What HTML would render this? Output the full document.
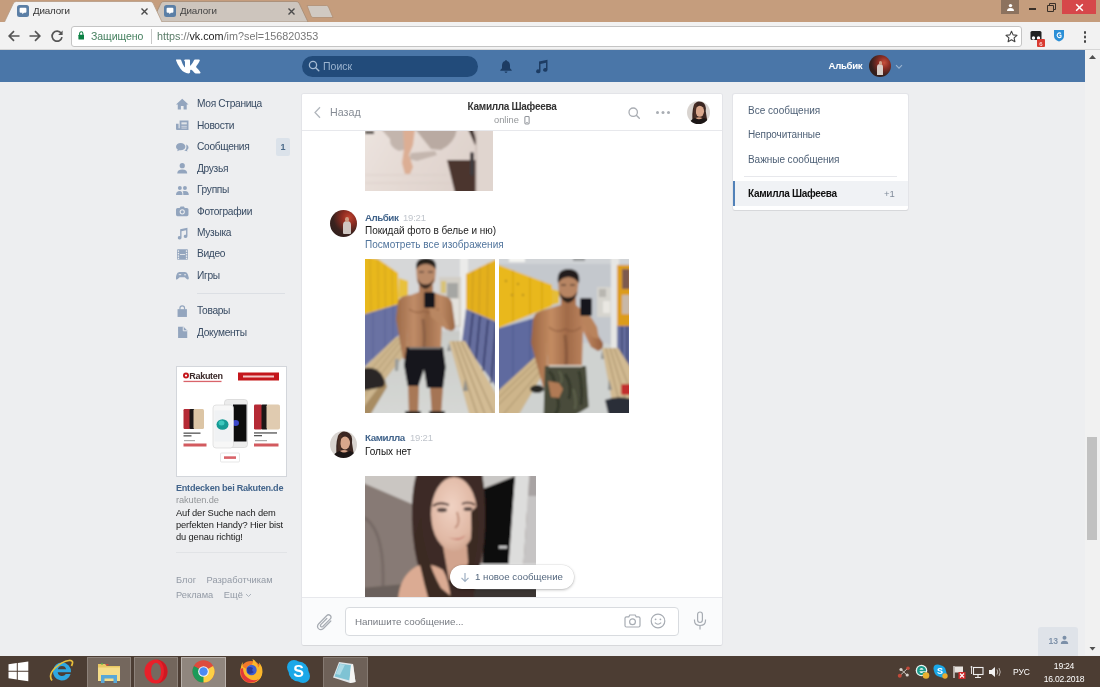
<!DOCTYPE html>
<html><head><meta charset="utf-8">
<style>
*{box-sizing:border-box;margin:0;padding:0}
html,body{width:1100px;height:687px;overflow:hidden;background:#edeef0;font-family:"Liberation Sans",sans-serif;}
#root{position:relative;width:1100px;height:687px;overflow:hidden;background:#edeef0}
.abs{position:absolute}
div.abs{will-change:opacity}
/* chrome */
#tabstrip{left:0;top:0;width:1100px;height:23px;background:#c59d7d}
#toolbar{left:0;top:22px;width:1100px;height:28px;background:#f2f2f2;border-bottom:1px solid #d6d6d6}
#urlbox{left:70.500px;top:25.500px;width:951px;height:21px;background:#fff;border:1px solid #c4c4c4;border-radius:3px}
.tabtxt{font-size:9.800px;color:#333;top:5.400px;letter-spacing:-0.15px;line-height:12px}
/* vk header */
#vkhead{left:0;top:50px;width:1085px;height:32px;background:#4a76a8}
#search{left:302px;top:56px;width:176px;height:21px;border-radius:11px;background:#224b7a}
/* scrollbar */
#sb{left:1085px;top:50px;width:15px;height:605px;background:#f1f1f1}
#sbthumb{left:1087px;top:437px;width:10px;height:103px;background:#c1c1c1}
/* left nav */
.nav{left:197px;font-size:11px;color:#2a5885;letter-spacing:-0.1px}
.nav.i{left:176px}
/* panels */
.panel{background:#fff;border-radius:2px;box-shadow:0 1px 0 0 #d7d8db,0 0 0 1px #e3e4e8}
#chat{left:302px;top:94px;width:420px;height:551px}
#right{left:733px;top:94px;width:175px;height:116px}
#chathead{left:302px;top:94px;width:420px;height:37px;background:#fff;border-bottom:1px solid #e7e8ec;border-radius:2px 2px 0 0}
#chatfoot{left:302px;top:597px;width:420px;height:48px;background:#fafbfc;border-top:1px solid #e7e8ec;border-radius:0 0 2px 2px}
#input{left:345px;top:607px;width:334px;height:28.500px;background:#fff;border:1px solid #d8dbdf;border-radius:4px}
/* taskbar */
#taskbar{left:0;top:656px;width:1100px;height:31px;background:#4c3d33}
.t11{font-size:11px}
.blue{color:#2a5885}
</style></head><body><div id="root">

<!-- CHROME TAB STRIP -->
<div id="tabstrip" class="abs"></div>
<svg class="abs" style="left:0;top:0" width="1100" height="23">
  <path d="M152 22 L161 3 Q162 1.5 164 1.5 L296 1.5 Q298 1.5 299 3 L308 22 Z" fill="#cdc5bd" stroke="#a48a74" stroke-width="0.8"/>
  <path d="M0 22 L4.500 22 L13.500 3 Q14.500 1.500 16.500 1.500 L150 1.500 Q152 1.5 153 3 L162 22 L1100 22 L1100 23 L0 23 Z" fill="#f2f2f2"/>
  <path d="M4.500 22 L13.500 3 Q14.500 1.500 16.500 1.500 L150 1.500 Q152 1.5 153 3 L162 22" fill="none" stroke="#b59a84" stroke-width="0.8"/>
  <path d="M307 5.500 L326.500 5.500 Q328 5.500 328.500 7 L333 17.500 L313 17.500 Q311.500 17.500 311 16 Z" fill="#d0c9c2" stroke="#b08f74" stroke-width="0.8"/>
</svg>
<div id="toolbar" class="abs"></div>
<div id="urlbox" class="abs"></div>


<!-- tab contents -->
<svg class="abs" style="left:17px;top:5px" width="12" height="12" viewBox="0 0 12 12"><rect width="12" height="12" rx="2.5" fill="#5b7fa6"/><path d="M2.600 3.800 Q2.600 2.800 3.600 2.800 L8.400 2.800 Q9.400 2.800 9.400 3.800 L9.400 6.700 Q9.400 7.700 8.400 7.700 L7 7.700 L5.300 9.300 L5.300 7.700 L3.600 7.700 Q2.600 7.700 2.600 6.700 Z" fill="#fff"/></svg>
<div class="abs tabtxt" style="left:33px">Диалоги</div>
<svg class="abs" style="left:140px;top:7px" width="9" height="9" viewBox="0 0 9 9"><path d="M1.500 1.500 L7.500 7.500 M7.500 1.500 L1.500 7.500" stroke="#4a4a4a" stroke-width="1.400"/></svg>
<svg class="abs" style="left:164px;top:5px" width="12" height="12" viewBox="0 0 12 12"><rect width="12" height="12" rx="2.500" fill="#5b7fa6"/><path d="M2.600 3.800 Q2.600 2.800 3.600 2.800 L8.400 2.800 Q9.400 2.800 9.400 3.800 L9.400 6.700 Q9.400 7.700 8.400 7.700 L7 7.700 L5.300 9.300 L5.300 7.700 L3.600 7.700 Q2.600 7.700 2.600 6.700 Z" fill="#fff"/></svg>
<div class="abs tabtxt" style="left:180px;color:#444">Диалоги</div>
<svg class="abs" style="left:287px;top:7px" width="9" height="9" viewBox="0 0 9 9"><path d="M1.500 1.500 L7.500 7.500 M7.500 1.500 L1.500 7.500" stroke="#4a4a4a" stroke-width="1.400"/></svg>
<!-- window controls -->
<div class="abs" style="left:1001px;top:0;width:18px;height:14px;background:#8c725e"></div>
<svg class="abs" style="left:1005.500px;top:3px" width="9" height="9" viewBox="0 0 9 9"><circle cx="4.500" cy="2.600" r="1.700" fill="#fff"/><path d="M1 8 Q1 5 4.500 5 Q8 5 8 8 Z" fill="#fff"/></svg>
<div class="abs" style="left:1029px;top:8px;width:7px;height:2px;background:#3a3028"></div>
<svg class="abs" style="left:1046px;top:2px" width="11" height="11" viewBox="0 0 11 11"><path d="M1.500 3.500 H7.500 V9.500 H1.500 Z M3.500 3.500 V1.500 H9.500 V7.500 H7.500" fill="none" stroke="#3a3028" stroke-width="1"/></svg>
<div class="abs" style="left:1062px;top:0;width:34px;height:14px;background:#d6474a"></div>
<svg class="abs" style="left:1075px;top:3px" width="9" height="9" viewBox="0 0 9 9"><path d="M1.200 1.200 L7.800 7.800 M7.800 1.200 L1.200 7.800" stroke="#fff" stroke-width="1.500"/></svg>
<!-- toolbar icons -->
<svg class="abs" style="left:7px;top:29px" width="14" height="14" viewBox="0 0 14 14"><path d="M12.500 7 H2.500 M7 2.200 L2.200 7 L7 11.800" fill="none" stroke="#555" stroke-width="1.700"/></svg>
<svg class="abs" style="left:28px;top:29px" width="14" height="14" viewBox="0 0 14 14"><path d="M1.500 7 H11.500 M7 2.200 L11.800 7 L7 11.800" fill="none" stroke="#555" stroke-width="1.700"/></svg>
<svg class="abs" style="left:50px;top:29px" width="14" height="14" viewBox="0 0 14 14"><path d="M11.200 4.300 A5 5 0 1 0 12 8.200" fill="none" stroke="#555" stroke-width="1.700"/><path d="M12.600 1.500 V6 H8.100 Z" fill="#555"/></svg>
<svg class="abs" style="left:77.800px;top:30.800px" width="6.500" height="9" viewBox="0 0 8 11"><path d="M2 5 V3 A2 2 0 0 1 6 3 V5" fill="none" stroke="#0b8043" stroke-width="1.300"/><rect x="0.500" y="4.500" width="7" height="6" rx="0.800" fill="#0b8043"/></svg>
<div class="abs" style="left:91px;top:30px;font-size:10.500px;color:#45805f;letter-spacing:-0.05px;line-height:12px">Защищено</div>
<div class="abs" style="left:151px;top:29px;width:1px;height:15px;background:#c8c8c8"></div>
<div class="abs" style="left:157px;top:30px;font-size:10.800px;color:#777;letter-spacing:0px;line-height:12px"><span style="color:#5a7c68">https</span>://<span style="color:#222">vk.com</span>/im?sel=156820353</div>
<svg class="abs" style="left:1005px;top:30px" width="13" height="13" viewBox="0 0 13 13"><path d="M6.500 1.300 L8.100 4.900 L12 5.300 L9.100 7.900 L9.900 11.700 L6.500 9.700 L3.100 11.700 L3.900 7.900 L1 5.300 L4.900 4.900 Z" fill="none" stroke="#444" stroke-width="1.100" stroke-linejoin="round"/></svg>
<svg class="abs" style="left:1030px;top:30px" width="16" height="17" viewBox="0 0 16 17"><rect x="0.500" y="1" width="11" height="9" rx="1.500" fill="#222"/><circle cx="3.500" cy="8" r="1.700" fill="#fff"/><circle cx="8.500" cy="8" r="1.700" fill="#fff"/><rect x="7" y="9" width="8" height="8" rx="1" fill="#d93a31"/><text x="11" y="15.500" font-size="6" fill="#fff" text-anchor="middle" font-family="Liberation Sans">6</text></svg>
<svg class="abs" style="left:1053px;top:29px" width="12" height="13" viewBox="0 0 12 13"><path d="M1 1 H11 V7 Q11 10.500 6 12.500 Q1 10.500 1 7 Z" fill="#2b8fd6"/><path d="M8 4.500 A2.300 2.300 0 1 0 8 8 L8 6.300 L6.200 6.300" fill="none" stroke="#fff" stroke-width="1.100"/></svg>
<div class="abs" style="left:1083.500px;top:31px;width:2.500px;height:2.500px;border-radius:50%;background:#444;box-shadow:0 4.500px 0 #444,0 9px 0 #444"></div>

<!-- VK HEADER -->
<div id="vkhead" class="abs"></div>
<div id="search" class="abs"></div>


<!-- vk header content -->
<svg class="abs" style="left:176px;top:59px" width="26" height="15" viewBox="0 0 26 15"><path d="M0.300 0.600 H4.300 Q5 0.600 5.200 1.300 Q6.600 5.800 8.400 8 Q9 8.600 9 7.600 V3.200 Q8.900 1.900 8 1.500 Q8.300 0.600 9.400 0.600 H13.300 Q14 0.600 14 1.500 V6.300 Q14.100 7 14.600 6.600 Q16.500 4.700 18 1.300 Q18.300 0.600 19 0.600 H22.900 Q24.100 0.600 23.700 1.800 Q22.900 4 20.300 7.300 Q19.900 7.900 20.400 8.500 Q23.300 11.300 24.400 13.200 Q24.800 14.400 23.600 14.400 H19.800 Q19 14.400 18.400 13.700 Q16.500 11.500 15.300 10.800 Q14.100 10.400 14.100 11.700 V13.300 Q14.100 14.400 12.500 14.400 Q7.800 14.400 4.300 9.600 Q1.300 5.400 0 1.300 Q-0.100 0.600 0.300 0.600 Z" fill="#fff"/></svg>
<svg class="abs" style="left:308px;top:60px" width="12" height="12" viewBox="0 0 12 12"><circle cx="5" cy="5" r="3.600" fill="none" stroke="#a5bbd3" stroke-width="1.300"/><path d="M7.700 7.700 L10.800 10.800" stroke="#a5bbd3" stroke-width="1.400" stroke-linecap="round"/></svg>
<div class="abs" style="left:323px;top:60px;font-size:10.500px;color:#9bb4d0">Поиск</div>
<svg class="abs" style="left:499px;top:59px" width="14" height="15" viewBox="0 0 14 15"><path d="M7 1 Q7.900 1 7.900 1.900 Q11 2.800 11 6.500 V9.300 L12.700 11 V11.700 H1.300 V11 L3 9.300 V6.500 Q3 2.800 6.100 1.900 Q6.100 1 7 1 Z" fill="#1d3c63"/><path d="M5.500 12.600 H8.500 Q8.300 14 7 14 Q5.700 14 5.500 12.600 Z" fill="#1d3c63"/></svg>
<svg class="abs" style="left:534px;top:59px" width="15" height="15" viewBox="0 0 15 15"><path d="M5 2.400 L13.500 0.800 V10.800 A2.200 1.900 0 1 1 12 9.100 V3.800 L6.500 4.900 V12.200 A2.200 1.900 0 1 1 5 10.500 Z" fill="#1d3c63"/></svg>
<div class="abs" style="left:828.500px;top:60px;font-size:9.600px;font-weight:700;color:#fff;letter-spacing:-0.3px">Альбик</div>
<div class="abs" style="left:869px;top:55px;width:22px;height:22px;border-radius:50%;background:radial-gradient(circle at 68% 35%,#c8503c 0,#8a2d24 28%,#35201d 62%,#2a1b19 100%);overflow:hidden"><div class="abs" style="left:8px;top:9px;width:6px;height:11px;border-radius:3px 3px 0 0;background:#d9cfc9"></div><div class="abs" style="left:9.500px;top:6px;width:3.500px;height:3.500px;border-radius:50%;background:#d3a48c"></div></div>
<svg class="abs" style="left:895px;top:64px" width="8" height="6" viewBox="0 0 8 6"><path d="M1 1.200 L4 4.200 L7 1.200" fill="none" stroke="#9bb4d0" stroke-width="1.100"/></svg>

<!-- left nav -->
<svg class="abs" style="left:176px;top:97.5px" width="13" height="13" viewBox="0 0 12.500 12.500" fill="#93a5be"><path d="M6 0.800 L12 6.200 H10.300 V11 H7.300 V7.800 H4.700 V11 H1.700 V6.200 H0 Z"/></svg><div class="abs" style="left:197px;top:98px;font-size:10.200px;color:#384b63;line-height:12px;letter-spacing:-0.32px">Моя Страница</div>
<svg class="abs" style="left:176px;top:119.0px" width="13" height="13" viewBox="0 0 12.500 12.500" fill="#93a5be"><path d="M3.500 1.500 H12 V10.500 H1 Q0 10.500 0 9.500 V4.500 H2.500 V9 H3.500 Z"/><rect x="5.200" y="3.200" width="5.200" height="2" fill="#edeef0" opacity="0.850"/><rect x="5.200" y="6.600" width="5.200" height="0.800" fill="#edeef0" opacity="0.800"/><rect x="5.200" y="8.300" width="5.200" height="0.800" fill="#edeef0" opacity="0.800"/></svg><div class="abs" style="left:197px;top:119.5px;font-size:10.200px;color:#384b63;line-height:12px;letter-spacing:-0.32px">Новости</div>
<svg class="abs" style="left:176px;top:140.5px" width="13" height="13" viewBox="0 0 12.500 12.500" fill="#93a5be"><path d="M4.500 2 C7 2 9 3.500 9 5.500 C9 7.500 7 9 4.500 9 C4 9 3.600 8.950 3.200 8.850 L1.200 9.800 L1.700 8.200 C0.600 7.500 0 6.600 0 5.500 C0 3.500 2 2 4.500 2 Z"/><path d="M9.800 3.400 C11.200 4 12 5 12 6.300 C12 7.300 11.500 8.100 10.600 8.700 L11 10.200 L9.300 9.300 C8.900 9.400 8.500 9.500 8 9.500 C9.300 8.600 10 7.300 10 5.800 C10 4.900 9.950 4.100 9.800 3.400 Z"/></svg><div class="abs" style="left:197px;top:141px;font-size:10.200px;color:#384b63;line-height:12px;letter-spacing:-0.32px">Сообщения</div>
<svg class="abs" style="left:176px;top:162.0px" width="13" height="13" viewBox="0 0 12.500 12.500" fill="#93a5be"><circle cx="6" cy="3.500" r="2.500"/><path d="M1.200 11 Q1.200 7.300 6 7.300 Q10.800 7.300 10.800 11 Z"/></svg><div class="abs" style="left:197px;top:162.5px;font-size:10.200px;color:#384b63;line-height:12px;letter-spacing:-0.32px">Друзья</div>
<svg class="abs" style="left:176px;top:183.5px" width="13" height="13" viewBox="0 0 12.500 12.500" fill="#93a5be"><circle cx="3.700" cy="3.800" r="1.900"/><circle cx="8.600" cy="3.800" r="1.900"/><path d="M0 10.500 Q0 6.800 3.700 6.800 Q6.200 6.800 6.200 10.500 Z"/><path d="M7 10.500 Q7.200 7.600 6.300 7 Q7.200 6.800 8.600 6.800 Q12.300 6.800 12.300 10.500 Z"/></svg><div class="abs" style="left:197px;top:184px;font-size:10.200px;color:#384b63;line-height:12px;letter-spacing:-0.32px">Группы</div>
<svg class="abs" style="left:176px;top:205.0px" width="13" height="13" viewBox="0 0 12.500 12.500" fill="#93a5be"><path d="M1.500 2.800 H3.500 L4.400 1.500 H7.600 L8.500 2.800 H10.500 Q12 2.800 12 4.300 V9.200 Q12 10.700 10.500 10.700 H1.500 Q0 10.700 0 9.200 V4.300 Q0 2.800 1.500 2.800 Z"/><circle cx="6" cy="6.600" r="2.500" fill="#edeef0"/><circle cx="6" cy="6.600" r="1.500"/></svg><div class="abs" style="left:197px;top:205.5px;font-size:10.200px;color:#384b63;line-height:12px;letter-spacing:-0.32px">Фотографии</div>
<svg class="abs" style="left:176px;top:226.5px" width="13" height="13" viewBox="0 0 12.500 12.500" fill="#93a5be"><path d="M4 2.200 L11 0.800 V9 A1.800 1.600 0 1 1 9.700 7.500 V3.200 L5.300 4.100 V10.300 A1.800 1.600 0 1 1 4 8.800 Z"/></svg><div class="abs" style="left:197px;top:227px;font-size:10.200px;color:#384b63;line-height:12px;letter-spacing:-0.32px">Музыка</div>
<svg class="abs" style="left:176px;top:247.8px" width="13" height="13" viewBox="0 0 12.500 12.500" fill="#93a5be"><rect x="1" y="1.300" width="10.500" height="10" rx="0.800"/><g fill="#edeef0"><rect x="1.700" y="2.300" width="1.300" height="1.400"/><rect x="1.700" y="4.700" width="1.300" height="1.400"/><rect x="1.700" y="7.100" width="1.300" height="1.400"/><rect x="1.700" y="9.300" width="1.300" height="1.400"/><rect x="9.500" y="2.300" width="1.300" height="1.400"/><rect x="9.500" y="4.700" width="1.300" height="1.400"/><rect x="9.500" y="7.100" width="1.300" height="1.400"/><rect x="9.500" y="9.300" width="1.300" height="1.400"/><rect x="3.800" y="5.900" width="5" height="0.800"/></g></svg><div class="abs" style="left:197px;top:248.3px;font-size:10.200px;color:#384b63;line-height:12px;letter-spacing:-0.32px">Видео</div>
<svg class="abs" style="left:176px;top:269.2px" width="13" height="13" viewBox="0 0 12.500 12.500" fill="#93a5be"><path d="M3.300 3 H8.700 Q10.800 3 11.500 5.500 L12.300 8.500 Q12.500 10 11.200 10 Q10.300 10 9.500 9 L8.500 8 H3.500 L2.500 9 Q1.700 10 0.800 10 Q-0.500 10 -0.300 8.500 L0.500 5.500 Q1.200 3 3.300 3 Z"/><circle cx="8.700" cy="5.500" r="0.800" fill="#edeef0"/><rect x="2.600" y="5" width="2.400" height="0.900" fill="#edeef0"/></svg><div class="abs" style="left:197px;top:269.7px;font-size:10.200px;color:#384b63;line-height:12px;letter-spacing:-0.32px">Игры</div>
<svg class="abs" style="left:176px;top:304.5px" width="13" height="13" viewBox="0 0 12.500 12.500" fill="#93a5be"><path d="M1.500 4 H10.500 V11.500 H1.500 Z"/><path d="M3.800 4.500 V3 A2.200 2.200 0 0 1 8.200 3 V4.500" fill="none" stroke="#93a5be" stroke-width="1.100"/></svg><div class="abs" style="left:197px;top:305px;font-size:10.200px;color:#384b63;line-height:12px;letter-spacing:-0.32px">Товары</div>
<svg class="abs" style="left:176px;top:326.0px" width="13" height="13" viewBox="0 0 12.500 12.500" fill="#93a5be"><path d="M2 0.800 H7.300 L10.800 4.300 V11.500 H2 Z"/><path d="M7 1 V4.600 H10.600" fill="none" stroke="#edeef0" stroke-width="0.900"/></svg><div class="abs" style="left:197px;top:326.5px;font-size:10.200px;color:#384b63;line-height:12px;letter-spacing:-0.32px">Документы</div>
<div class="abs" style="left:276px;top:138px;width:14px;height:18px;background:#dbe2ea;border-radius:2px"></div><div class="abs" style="left:276px;top:138px;width:14px;height:18px;font-size:9px;font-weight:700;color:#4a6a8a;text-align:center;line-height:18px">1</div>
<div class="abs" style="left:197px;top:293px;width:88px;height:1px;background:#dcdfe4"></div>


<!-- ad -->
<div class="abs" style="left:176px;top:366px;width:111px;height:111px;background:#fff;border:1px solid #d3d6db"></div>
<svg class="abs" style="left:177px;top:367px" width="109" height="109" viewBox="0 0 109 109">
<defs><filter id="ba" x="-5%" y="-5%" width="110%" height="110%"><feGaussianBlur stdDeviation="0.350"/></filter></defs>
<g filter="url(#ba)">
<circle cx="9" cy="8.600" r="3" fill="#c4161c"/><circle cx="9" cy="8.600" r="1.100" fill="#fff"/>
<text x="12.300" y="11.800" font-family="Liberation Sans" font-weight="700" font-size="9" fill="#3a2a2a" letter-spacing="-0.300">Rakuten</text>
<rect x="6.500" y="13.800" width="38" height="1.300" fill="#d9646a"/>
<rect x="61" y="5.500" width="41" height="8" fill="#c4161c"/>
<rect x="66" y="8.500" width="31" height="2" fill="#f2c7c8"/>
<!-- left phones -->
<rect x="6.500" y="42" width="7" height="20" rx="1.200" fill="#b52a35"/><rect x="12.500" y="42" width="5" height="20" rx="1" fill="#1a1718"/><rect x="16.500" y="42" width="10.500" height="20" rx="1.500" fill="#dcc5a5"/>
<rect x="6.500" y="65.500" width="17" height="1.300" fill="#555"/><rect x="6.500" y="68.200" width="8" height="1.300" fill="#555"/>
<rect x="7" y="73" width="11" height="1.200" fill="#aaa"/>
<rect x="6.500" y="76.500" width="23" height="3" fill="#d25a5f"/>
<!-- center phones -->
<rect x="47.500" y="32.500" width="23" height="48" rx="3" fill="#ececec" stroke="#cfcfcf" stroke-width="0.600"/><rect x="56" y="37.500" width="13.500" height="37" fill="#0b0b10"/>
<ellipse cx="58.500" cy="56" rx="3.500" ry="3" fill="#3a46c8"/>
<rect x="36" y="38" width="20.500" height="43" rx="3" fill="#f7f7f7" stroke="#d4d4d4" stroke-width="0.600"/><rect x="37.500" y="43.500" width="17.500" height="31" fill="#f0f2f4"/>
<ellipse cx="45.500" cy="57.500" rx="6" ry="5.300" fill="#149a94"/><ellipse cx="44.500" cy="56" rx="3" ry="2.500" fill="#3cc7bd"/>
<!-- right phones -->
<rect x="77" y="37.500" width="8" height="25" rx="1.300" fill="#b52a35"/><rect x="84.500" y="37.500" width="6" height="25" rx="1" fill="#1a1718"/><rect x="89.500" y="37.500" width="13.500" height="25" rx="1.800" fill="#e0cbb0"/>
<rect x="77" y="65.300" width="23" height="1.300" fill="#555"/><rect x="77" y="68" width="8" height="1.300" fill="#555"/>
<rect x="78" y="73" width="12" height="1.200" fill="#aaa"/>
<rect x="77" y="76.500" width="24.500" height="3" fill="#d25a5f"/>
<rect x="43.500" y="86" width="19" height="9" rx="1" fill="#fff" stroke="#dcdcdc" stroke-width="0.700"/>
<rect x="47" y="89.300" width="12" height="2.600" fill="#d9646a"/>
</g></svg>
<div class="abs" style="left:176px;top:481.500px;font-size:9.100px;font-weight:700;color:#42648b;line-height:12px;letter-spacing:-0.25px;white-space:nowrap">Entdecken bei Rakuten.de</div>
<div class="abs" style="left:176px;top:494px;font-size:9.300px;color:#939699;line-height:12px;letter-spacing:-0.1px">rakuten.de</div>
<div class="abs" style="left:176px;top:508.300px;font-size:9.300px;color:#1a1a1a;line-height:11.800px;white-space:nowrap;letter-spacing:-0.12px">Auf der Suche nach dem<br>perfekten Handy? Hier bist<br>du genau richtig!</div>
<div class="abs" style="left:176px;top:552px;width:111px;height:1px;background:#e1e3e6"></div>
<div class="abs" style="left:176px;top:574px;font-size:9.300px;color:#939aa5;line-height:12px;white-space:nowrap">Блог<span style="margin-left:10.500px">Разработчикам</span></div>
<div class="abs" style="left:176px;top:588.500px;font-size:9.300px;color:#939aa5;line-height:12px;white-space:nowrap">Реклама<span style="margin-left:10.500px">Ещё</span></div>
<svg class="abs" style="left:245px;top:593px" width="7" height="5" viewBox="0 0 7 5"><path d="M1 1 L3.500 3.500 L6 1" fill="none" stroke="#a5acb6" stroke-width="0.900"/></svg>
<!-- bottom right counter -->
<div class="abs" style="left:1038px;top:627px;width:40px;height:29px;background:#dfe3e9;border-radius:3px 3px 0 0"></div>
<div class="abs" style="left:1048.500px;top:635px;font-size:8.600px;font-weight:700;color:#8093ab;line-height:12px">13</div>
<svg class="abs" style="left:1060px;top:635px" width="9" height="10" viewBox="0 0 9 10"><circle cx="4.500" cy="2.800" r="2" fill="#7b8fa8"/><path d="M0.800 9 Q0.800 5.800 4.500 5.800 Q8.200 5.800 8.200 9 Z" fill="#7b8fa8"/></svg>

<!-- SCROLLBAR -->
<div id="sb" class="abs"></div>
<div id="sbthumb" class="abs"></div>
<!-- scrollbar arrows -->
<svg class="abs" style="left:1088px;top:54px" width="9" height="6"><path d="M4.500 1 L8 5 H1 Z" fill="#505050"/></svg>
<svg class="abs" style="left:1088px;top:646px" width="9" height="6"><path d="M4.500 4.500 L7.500 1 H1.500 Z" fill="#505050"/></svg>


<!-- PANELS -->
<div id="chat" class="abs panel"></div>
<div id="chathead" class="abs"></div>
<div id="chatfoot" class="abs"></div>
<div id="input" class="abs"></div>
<div id="right" class="abs panel"></div>


<!-- chat header content -->
<svg class="abs" style="left:312.500px;top:105.500px" width="9" height="13" viewBox="0 0 9 13"><path d="M7 1.200 L2 6.500 L7 11.800" fill="none" stroke="#b2b7bd" stroke-width="1.300"/></svg>
<div class="abs" style="left:330px;top:106.200px;font-size:10.700px;color:#868c95;line-height:12px">Назад</div>
<div class="abs" style="left:412px;top:101px;width:200px;text-align:center;font-size:10px;font-weight:700;color:#333;line-height:12px;letter-spacing:-0.3px">Камилла Шафеева</div>
<div class="abs" style="left:494px;top:114px;font-size:9.300px;color:#939699;line-height:12px">online</div>
<svg class="abs" style="left:524px;top:116px" width="6" height="8.500" viewBox="0 0 7 10"><rect x="1" y="0.700" width="5" height="8.600" rx="1" fill="none" stroke="#8f9399" stroke-width="1.200"/><rect x="2.600" y="7.200" width="1.800" height="1" fill="#8f9399"/></svg>
<svg class="abs" style="left:627px;top:106px" width="15" height="15" viewBox="0 0 15 15"><circle cx="6.200" cy="6.200" r="4.200" fill="none" stroke="#a9adb3" stroke-width="1.300"/><path d="M9.300 9.300 L12.300 12.300" stroke="#a9adb3" stroke-width="1.400" stroke-linecap="round"/></svg>
<div class="abs" style="left:656px;top:111px;width:3px;height:3px;border-radius:50%;background:#a9adb3;box-shadow:5.500px 0 0 #a9adb3,11px 0 0 #a9adb3"></div>
<svg class="abs" style="left:687px;top:101px" width="23" height="23" viewBox="0 0 27 27"><g clip-path="url(#ca2)"><rect width="27" height="27" fill="#d9d4d0"/><g filter="url(#bav)"><path d="M7 28 Q5 14 8 5 Q11 -1 17 1 Q23 3 22 12 Q23 20 25 28 Z" fill="#3b2720"/><ellipse cx="15" cy="12" rx="5" ry="6.500" fill="#d9a78c"/><path d="M9 3 Q7 12 9 22 L12 22 Q9 12 12 4 Z" fill="#4a2f25"/><path d="M2 28 Q4 21 10 20 Q15 23 20 20 Q25 21 26 28 Z" fill="#1b1513"/><path d="M10 20 Q14 18 18 20 Q14 23 10 20 Z" fill="#d3a086"/></g></g></svg>

<!-- photo 1 (cut off) -->
<svg class="abs" style="left:365px;top:131px" width="128" height="60" viewBox="0 0 128 60">
<defs><filter id="b1" x="-5%" y="-5%" width="110%" height="110%"><feGaussianBlur stdDeviation="1.200"/></filter><clipPath id="c1"><rect width="128" height="60"/></clipPath>
<linearGradient id="fl" x1="0" x2="1" y1="0" y2="0.300"><stop offset="0" stop-color="#ece4df"/><stop offset="0.500" stop-color="#e4d9d3"/><stop offset="1" stop-color="#ddd0ca"/></linearGradient></defs>
<g clip-path="url(#c1)"><rect width="128" height="60" fill="#e4d9d3"/><g filter="url(#b1)">
<rect x="-3" y="-3" width="134" height="66" fill="url(#fl)"/>
<path d="M16 -2 L40 -2 L42 18 L34 20 Q24 16 25 8 Z" fill="#c3b5ad"/>
<path d="M50 -2 L92 -2 Q90 12 76 19 L66 18 L58 8 Z" fill="#b9aaa2"/>
<path d="M46 22 L70 20 L72 24 L52 30 L44 28 Z" fill="#c4b6ae"/>
<path d="M38 -2 L50 -2 L48 14 L44 24 L48 36 L45 43 L40 43 L37 32 L39 18 Z" fill="#dcae94"/>
<rect x="0" y="0" width="9" height="3" fill="#3a302c"/>
<path d="M82 29 L111 29 L111 62 L90 62 Z" fill="#4b352e"/>
<path d="M103 -2 L108 -2 L112 12 L110 14 Z" fill="#3d2f2b"/>
<rect x="105" y="21" width="4" height="24" rx="2" fill="#3f3a3c"/>
<rect x="111" y="-2" width="20" height="66" fill="#e0d5cf"/>
<rect x="110.500" y="-2" width="1.500" height="66" fill="#c9bcb5"/>
<path d="M0 44 H82 M0 52 H86" stroke="#d9cdc6" stroke-width="0.800"/>
</g></g></svg>

<!-- message 1 -->
<div class="abs" style="left:330px;top:210px;width:27px;height:27px;border-radius:50%;overflow:hidden;background:radial-gradient(circle at 70% 28%,#c0432f 0,#8e2c21 26%,#3a221e 58%,#2a1d1b 100%)"><div class="abs" style="left:12.500px;top:11px;width:8px;height:13px;border-radius:4px 4px 1px 1px;background:#cfc6c1"></div><div class="abs" style="left:14.500px;top:6.500px;width:4.500px;height:5px;border-radius:50%;background:#cf9c84"></div></div>
<div class="abs" style="left:365px;top:211.700px;font-size:9.800px;font-weight:700;color:#42648b;line-height:12px;letter-spacing:-0.5px">Альбик</div>
<div class="abs" style="left:403px;top:211.700px;font-size:9.500px;color:#c0c5cc;line-height:12px;letter-spacing:-0.2px">19:21</div>
<div class="abs" style="left:365px;top:225px;font-size:10px;color:#1c1c1c;line-height:12px;letter-spacing:-0.03px">Покидай фото в белье и ню)</div>
<div class="abs" style="left:365px;top:238.500px;font-size:10px;color:#50749c;line-height:12px;letter-spacing:0.04px">Посмотреть все изображения</div>

<!-- photo 2a -->
<svg class="abs" style="left:365px;top:259px" width="130" height="154" viewBox="0 0 130 154">
<defs><filter id="b2" x="-5%" y="-5%" width="110%" height="110%"><feGaussianBlur stdDeviation="0.800"/></filter><clipPath id="c2"><rect width="130" height="154"/></clipPath>
<linearGradient id="sk1" x1="0" x2="1"><stop offset="0" stop-color="#9c6a48"/><stop offset="0.300" stop-color="#c08c68"/><stop offset="0.520" stop-color="#a06e4c"/><stop offset="0.750" stop-color="#bd8964"/><stop offset="1" stop-color="#9a6846"/></linearGradient>
<linearGradient id="fl2" x1="0" x2="0" y1="0" y2="1"><stop offset="0" stop-color="#c9cbc8"/><stop offset="1" stop-color="#d6d8d5"/></linearGradient></defs>
<g clip-path="url(#c2)"><rect width="130" height="154" fill="#d2d3d2"/><g filter="url(#b2)">
<rect x="-3" y="-3" width="136" height="80" fill="#d6d7d8"/>
<path d="M-3 95 L44 72 L100 72 L134 80 L134 158 L-3 158 Z" fill="url(#fl2)"/>
<rect x="95" y="-3" width="8" height="86" fill="#ebebea"/>
<rect x="74" y="18" width="22" height="50" fill="#d2cec6"/>
<rect x="82" y="24" width="11" height="15" fill="#a5a6a3"/><rect x="76" y="22" width="5" height="12" fill="#d8c277"/>
<rect x="86" y="40" width="8" height="26" fill="#e3e1dc"/>
<path d="M-3 -3 L13 0 L33 14 L34 45 L-3 56 Z" fill="#e8b81e"/>
<path d="M5 -1 L6 53 M13 1 L13.500 51 M20 5 L20.500 49 M27 10 L27.500 47" stroke="#c79a14" stroke-width="0.700" fill="none"/>
<path d="M34 19 L43 22 L43 36 L34 39 Z" fill="#e8c13e"/>
<path d="M-3 56 L34 45 L34 76 L-3 110 Z" fill="#6a72a3"/>
<path d="M8 53 L8 100 M20 50 L20 89 M28 47 L28 81" stroke="#565e90" stroke-width="0.800" fill="none"/>
<path d="M101 15 L134 -1 L134 64 L101 50 Z" fill="#e4b01f"/>
<path d="M108 12 L107 52 M115 8 L114 55 M123 4 L122 59" stroke="#c29313" stroke-width="0.800" fill="none"/>
<path d="M101 50 L134 64 L134 131 L97 82 Z" fill="#666e9e"/>
<path d="M108 54 L104 90 M115 57 L111 100 M123 61 L118 112 M131 64 L126 124" stroke="#2c3260" stroke-width="1.500" fill="none"/>
<path d="M-3 111 L31 78 L44 78 L44 90 L-3 150 Z" fill="#cdb68e"/>
<path d="M-3 120 L35 78 M-3 130 L39 78 M-3 140 L43 80" stroke="#a8906a" stroke-width="0.800" fill="none"/>
<path d="M-3 150 L20 120 L22 128 L4 158 L-3 158 Z" fill="#a88c62"/>
<path d="M30 100 L34 100 L33 112 L30 112 Z" fill="#9a9c9a"/>
<path d="M84 82 L100 82 L134 140 L134 158 L105 158 Z" fill="#d3bc94"/>
<path d="M88 82 L113 158 M92 82 L121 158 M96 82 L130 158" stroke="#9f8762" stroke-width="0.900" fill="none"/>
<path d="M84 84 L82 92 L86 92 Z M100 120 L98 132 L103 132 Z" fill="#8e8f8c"/>
<path d="M-3 110 Q10 106 17 116 Q22 124 18 128 L-3 132 Z" fill="#2a2725"/>
<!-- person -->
<path d="M43 126 L54 126 L53 158 L44 158 Z" fill="#a87856"/>
<path d="M65 128 L78 128 L76 158 L67 158 Z" fill="#a57554"/>
<path d="M40 152 L56 152 L56 158 L40 158 Z M64 152 L80 152 L80 158 L64 158 Z" fill="#2a2522"/>
<path d="M33 42 Q36 36 46 36 L54 33 L54 26 L68 26 L68 33 L76 36 Q85 37 87 44 L90 66 Q91 71 86 72 L80 70 L77 62 L76 89 L43 89 L42 70 L43 100 L38 100 L31 60 Z" fill="url(#sk1)"/>
<path d="M58 60 Q60 75 59 88" stroke="#77503a" stroke-width="3" fill="none" opacity="0.550"/>
<path d="M44 50 Q52 56 59 52 Q66 56 74 50" stroke="#8c5c3e" stroke-width="1.500" fill="none" opacity="0.600"/>
<path d="M64 48 L74 52 L80 60 L84 70 L78 68 L66 58 Z" fill="#b98762"/>
<path d="M51 8 Q51 2 61 2 Q71 2 71 9 L70 22 Q66 30 60.500 30 Q55 30 52 22 Z" fill="#b98a6b"/>
<path d="M51 10 Q50 -1 61 -1 Q72 -1 71 10 Q66 5 61 5 Q55 5 51 10 Z" fill="#28221f"/>
<path d="M52.500 19 Q54 29 60.500 30 Q67 29 69 19 Q66 26 60.500 25.500 Q55 26 52.500 19 Z" fill="#3a2a22"/>
<path d="M54 13 H59 M63 13 H68" stroke="#3a2a22" stroke-width="1.200"/>
<rect x="59" y="33" width="11" height="16" rx="1.800" fill="#17131a"/>
<path d="M41.500 88 L78 88 L80.700 108 L78 129 L62 129 L59 110 L53.500 127 L42.700 127 L39 106 Z" fill="#17161a"/>
<path d="M44 89 L76 89" stroke="#b9b2ab" stroke-width="1.200"/>
</g></g></svg>
<!-- photo 2b -->
<svg class="abs" style="left:499px;top:259px" width="130" height="154" viewBox="0 0 130 154">
<defs><clipPath id="c3"><rect width="130" height="154"/></clipPath>
<linearGradient id="sk2" x1="0" x2="1"><stop offset="0" stop-color="#9a6442"/><stop offset="0.280" stop-color="#c38c62"/><stop offset="0.500" stop-color="#a06a48"/><stop offset="0.750" stop-color="#be8660"/><stop offset="1" stop-color="#965f3e"/></linearGradient></defs>
<g clip-path="url(#c3)"><rect width="130" height="154" fill="#cdd0cf"/><g filter="url(#b2)">
<rect x="-3" y="-3" width="136" height="95" fill="#c4c8cd"/>
<rect x="-3" y="-3" width="136" height="8" fill="#d0d3d6"/>
<rect x="10" y="-2" width="16" height="5" fill="#f4f4f2"/><rect x="74" y="-2" width="12" height="4" fill="#9a9c9e"/>
<path d="M-3 100 L48 84 L105 84 L134 90 L134 158 L-3 158 Z" fill="#cfd2d0"/>
<rect x="112" y="-3" width="8" height="92" fill="#e6e6e4"/>
<rect x="98" y="28" width="14" height="30" fill="#d6d4ce"/><rect x="100" y="30" width="7" height="8" fill="#b8b6b0"/><rect x="104" y="42" width="7" height="12" fill="#e9e7e2"/>
<rect x="118" y="6" width="15" height="61" fill="#dc9c1c"/>
<rect x="123" y="10" width="8" height="20" fill="#7d5a50"/><rect x="123" y="36" width="8" height="19" fill="#c8b8a8"/>
<rect x="118" y="67" width="15" height="46" fill="#6670a0"/>
<path d="M123 67 V110 M128 67 V112" stroke="#343b66" stroke-width="1.300"/>
<path d="M-3 5 L53 26 L53 47 L-3 70 Z" fill="#e9b81c"/>
<path d="M14 11 L14 63 M31 18 L31 56 M43 22 L43 51" stroke="#c89a14" stroke-width="0.800" fill="none"/>
<circle cx="7" cy="22" r="0.900" fill="#9a7a20"/><circle cx="19" cy="25" r="0.900" fill="#9a7a20"/><circle cx="13" cy="36" r="0.900" fill="#9a7a20"/><circle cx="24" cy="36" r="0.900" fill="#9a7a20"/>
<path d="M53 30 L60 32 L60 44 L53 46 Z" fill="#e6bd38"/>
<path d="M-3 70 L46 56 L46 90 L-3 134 Z" fill="#5f6a9f"/>
<path d="M14 65 L14 118 M31 60 L31 103" stroke="#4f598c" stroke-width="0.900" fill="none"/>
<path d="M-3 134 L48 87 L48 108 L18.500 158 L-3 158 Z" fill="#cdb58b"/>
<path d="M-3 141 L48 92 M-3 148 L48 98 M2 158 L48 104" stroke="#a38b64" stroke-width="0.900" fill="none"/>
<path d="M103 89 L119 89 L134 112 L134 142 L113 142 Z" fill="#d1ba92"/>
<path d="M107 89 L120 142 M111 89 L127 142 M115 89 L134 138" stroke="#a38b66" stroke-width="0.900" fill="none"/>
<path d="M103 91 L102 100 L105 100 Z M110 120 L109 131 L113 131 Z" fill="#8e8f8c"/>
<rect x="122" y="125" width="12" height="11" rx="2" fill="#c22d2d"/>
<path d="M106 141 Q118 136 134 140 L134 158 L110 158 Z" fill="#2b2f38"/>
<ellipse cx="38" cy="130" rx="7" ry="4" fill="#2b2927"/>
<!-- person -->
<path d="M34 60 Q36 52 48 50 L62 46 L62 38 L77 38 L77 46 L84 52 Q88 56 90 62 L104 84 Q105 90 99 92 L92 88 L84 72 L83 107 L49 107 L47 82 L50 128 L44 128 L32 84 Z" fill="url(#sk2)"/>
<path d="M66 76 Q68 92 67 106" stroke="#744a32" stroke-width="3" fill="none" opacity="0.550"/>
<path d="M50 68 Q58 75 66 70 Q74 75 82 68" stroke="#87573a" stroke-width="1.600" fill="none" opacity="0.600"/>
<path d="M82 54 L92 58 L98 68 L100 80 L93 78 L84 64 Z" fill="#b9835c"/>
<path d="M59 22 Q59 14 69.500 14 Q80 14 79.500 23 L78 36 Q74 44 69 44 Q63 44 60 36 Z" fill="#b78564"/>
<path d="M59 24 Q57 10 69.500 10 Q82 10 80 24 Q75 18 69.500 18 Q63 18 59 24 Z" fill="#241f1e"/>
<path d="M60 32 Q62 43 69 44 Q76 43 78.500 32 Q75 39 69 38.500 Q63 39 60 32 Z" fill="#2c201b"/>
<path d="M62 26 H67 M71 26 H76" stroke="#33251f" stroke-width="1.200"/>
<rect x="81" y="39" width="12" height="18" rx="2" fill="#15121a"/>
<path d="M45.800 107 L87 107 L89.700 148 L73 158 L44.600 158 Z" fill="#484c3a"/>
<path d="M50 112 Q58 120 54 132 M66 115 Q74 126 70 140 M80 112 Q84 128 82 146 M58 138 Q62 148 56 156" stroke="#2e3226" stroke-width="3" fill="none" opacity="0.700"/>
<path d="M60 112 Q64 118 62 124 M74 130 Q78 140 76 150" stroke="#686c54" stroke-width="2" fill="none" opacity="0.700"/>
<path d="M50 107 L83 107" stroke="#e8e4dd" stroke-width="1.600"/>
<path d="M49 122 L60 124 L64 130 L60 139 L52 138 Z" fill="#b07a55"/>
</g></g></svg>
<!-- message 2 -->
<svg class="abs" style="left:330px;top:431px" width="27" height="27" viewBox="0 0 27 27"><defs><clipPath id="ca2"><circle cx="13.500" cy="13.500" r="13.500"/></clipPath><filter id="bav"><feGaussianBlur stdDeviation="0.700"/></filter></defs><g clip-path="url(#ca2)"><rect width="27" height="27" fill="#d9d4d0"/><g filter="url(#bav)"><path d="M7 28 Q5 14 8 5 Q11 -1 17 1 Q23 3 22 12 Q23 20 25 28 Z" fill="#3b2720"/><ellipse cx="15" cy="12" rx="5" ry="6.500" fill="#d9a78c"/><path d="M9 3 Q7 12 9 22 L12 22 Q9 12 12 4 Z" fill="#4a2f25"/><path d="M2 28 Q4 21 10 20 Q15 23 20 20 Q25 21 26 28 Z" fill="#1b1513"/><path d="M10 20 Q14 18 18 20 Q14 23 10 20 Z" fill="#d3a086"/></g></g></svg>
<div class="abs" style="left:365px;top:432px;font-size:9.800px;font-weight:700;color:#42648b;line-height:12px;letter-spacing:-0.4px">Камилла</div>
<div class="abs" style="left:410px;top:432px;font-size:9.500px;color:#c0c5cc;line-height:12px;letter-spacing:-0.2px">19:21</div>
<div class="abs" style="left:365px;top:446px;font-size:10px;color:#111;line-height:12px">Голых нет</div>

<!-- photo 3 -->
<svg class="abs" style="left:365px;top:476px" width="171" height="121" viewBox="0 0 171 121">
<defs><filter id="b3" x="-5%" y="-5%" width="110%" height="110%"><feGaussianBlur stdDeviation="1.300"/></filter><clipPath id="c4"><rect width="171" height="121"/></clipPath>
<radialGradient id="fc" cx="0.450" cy="0.400" r="0.700"><stop offset="0" stop-color="#f0d2c3"/><stop offset="0.700" stop-color="#e0b8a4"/><stop offset="1" stop-color="#c99c86"/></radialGradient></defs>
<g clip-path="url(#c4)"><rect width="171" height="121" fill="#8a7d78"/><g filter="url(#b3)">
<rect x="-4" y="-4" width="180" height="40" fill="#cac6c2"/>
<path d="M-4 6 L47 28 L54 86 L33 125 L-4 125 Z" fill="#877a75"/>
<path d="M-4 40 Q20 50 18 110" stroke="#776b66" stroke-width="3" fill="none"/>
<path d="M-4 112 L40 108 L36 125 L-4 125 Z" fill="#6b605c"/>
<path d="M118 -4 L151 -4 L151 -1 L118 12 Z" fill="#c9c7c5"/>
<path d="M118.700 12.500 L150.400 0 L143.700 88 L117.800 88 Z" fill="#0d0b0c"/>
<path d="M150.400 -4 L164.500 -4 L158.500 88 L143.700 88 Z" fill="#dddddc"/>
<path d="M164.500 -4 L175 -4 L175 20 L163 20 Z" fill="#a8a3a3"/>
<path d="M163 20 L175 20 L175 88 L158.500 88 Z" fill="#c6c4c4"/>
<rect x="100" y="88" width="75" height="25" fill="#e9e9e9"/>
<rect x="100" y="112" width="75" height="12" fill="#3b3533"/>
<rect x="134" y="70" width="8" height="2.500" fill="#d0d0d0"/>
<!-- hair -->
<path d="M52 -4 L117 -4 Q121 20 120 52 Q119 80 112 100 L108 125 L60 125 Q58 100 52 86 Q46 60 47 28 Q48 8 52 -4 Z" fill="#3d2c26"/>
<path d="M33 125 Q34 100 52 90 Q66 86 78 94 Q84 104 86 125 Z" fill="#dbab93"/>
<path d="M78 70 L102 70 L104 100 L84 104 Z" fill="#d2a48e"/>
<ellipse cx="89" cy="38" rx="23" ry="37" fill="url(#fc)"/>
<path d="M56 40 Q58 80 76 112 L92 125 L64 125 Q54 90 50 60 Z" fill="#3a2923"/>
<path d="M112 30 Q116 60 108 92 L100 100 Q108 70 106 36 Z" fill="#3a2923"/>
<path d="M68 30 Q74 25 84 29 M97 28 Q104 25 110 29" stroke="#3a2620" stroke-width="1.800" fill="none"/>
<ellipse cx="77" cy="34" rx="5" ry="2.200" fill="#5a4a44"/><ellipse cx="103" cy="33" rx="4.500" ry="2" fill="#5a4a44"/>
<path d="M92 36 Q96 48 90 52" stroke="#c08f7c" stroke-width="2" fill="none"/>
<path d="M83 61 Q92 65 101 59 Q94 68 83 61 Z" fill="#c98274"/>
</g></g></svg>

<!-- new msg pill -->
<div class="abs" style="left:450px;top:565px;width:124px;height:24px;border-radius:12px;background:#fff;box-shadow:0 1px 3px rgba(0,0,0,.25),0 0 0 0.500px rgba(0,0,0,.08)"></div>
<svg class="abs" style="left:460px;top:572px" width="10" height="11" viewBox="0 0 10 11"><path d="M5 1 V9 M1.500 5.800 L5 9.300 L8.500 5.800" fill="none" stroke="#9fb0c3" stroke-width="1.200"/></svg>
<div class="abs" style="left:475px;top:571px;font-size:9.700px;color:#54677e;line-height:12px">1 новое сообщение</div>

<!-- footer -->
<svg class="abs" style="left:316px;top:612px" width="17" height="19" viewBox="0 0 17 19"><path d="M14.800 9 L7.400 16.500 Q4.800 18.800 2.500 16.600 Q0.400 14.300 2.800 11.700 L10.600 3.700 Q12.500 1.900 14.300 3.500 Q15.900 5.300 14.100 7.100 L6.800 14.500 Q5.700 15.400 4.800 14.500 Q3.900 13.500 5 12.400 L10.800 6.500" fill="none" stroke="#a7acb3" stroke-width="1.250" stroke-linecap="round"/></svg>
<div class="abs" style="left:355px;top:615.500px;font-size:9.800px;color:#777b82;line-height:12px">Напишите сообщение...</div>
<svg class="abs" style="left:624px;top:614px" width="17" height="14" viewBox="0 0 17 14"><path d="M2.500 2.800 H4.800 L5.800 1 H11.200 L12.200 2.800 H14.500 Q16 2.800 16 4.300 V11.500 Q16 13 14.500 13 H2.500 Q1 13 1 11.500 V4.300 Q1 2.800 2.500 2.800 Z" fill="none" stroke="#a7acb3" stroke-width="1.200"/><circle cx="8.500" cy="7.700" r="2.900" fill="none" stroke="#a7acb3" stroke-width="1.200"/></svg>
<svg class="abs" style="left:650px;top:613px" width="16" height="16" viewBox="0 0 16 16"><circle cx="8" cy="8" r="6.800" fill="none" stroke="#a7acb3" stroke-width="1.200"/><circle cx="5.600" cy="6.300" r="0.900" fill="#a7acb3"/><circle cx="10.400" cy="6.300" r="0.900" fill="#a7acb3"/><path d="M4.800 9.600 Q8 12.800 11.200 9.600" fill="none" stroke="#a7acb3" stroke-width="1.100"/></svg>
<svg class="abs" style="left:693px;top:611px" width="14" height="20" viewBox="0 0 14 20"><rect x="4.600" y="1" width="4.800" height="10.500" rx="2.400" fill="none" stroke="#a7acb3" stroke-width="1.200"/><path d="M1.500 8.500 V9.500 Q1.500 14.500 7 14.500 Q12.500 14.500 12.500 9.500 V8.500 M7 14.500 V18.500" fill="none" stroke="#a7acb3" stroke-width="1.200"/></svg>

<!-- right panel content -->
<div class="abs" style="left:748px;top:104.700px;font-size:10px;color:#4d5f75;line-height:12px">Все сообщения</div>
<div class="abs" style="left:748px;top:129.200px;font-size:10px;color:#4d5f75;line-height:12px;letter-spacing:-0.1px">Непрочитанные</div>
<div class="abs" style="left:748px;top:153.700px;font-size:10px;color:#4d5f75;line-height:12px;letter-spacing:-0.05px">Важные сообщения</div>
<div class="abs" style="left:744px;top:176px;width:153px;height:1px;background:#e7e8ec"></div>
<div class="abs" style="left:733px;top:181px;width:175px;height:25px;background:#f0f2f5;border-left:2px solid #5181b8"></div>
<div class="abs" style="left:748px;top:187.500px;font-size:10px;font-weight:700;color:#111;line-height:12px;letter-spacing:-0.3px">Камилла Шафеева</div>
<div class="abs" style="left:884px;top:187.500px;font-size:9.500px;color:#7f8a99;line-height:12px">+1</div>

<!-- TASKBAR -->
<div id="taskbar" class="abs"></div>
<!-- taskbar content -->
<svg class="abs" style="left:8px;top:661px" width="21" height="21" viewBox="0 0 21 21"><path d="M0.500 3.300 L8.800 2.100 V9.800 H0.500 Z M9.800 1.950 L20.300 0.400 V9.800 H9.800 Z M0.500 10.800 H8.800 V18.500 L0.500 17.300 Z M9.800 10.800 H20.300 V20.200 L9.800 18.650 Z" fill="#fff"/></svg>
<!-- IE -->
<svg class="abs" style="left:49px;top:658px" width="26" height="26" viewBox="0 0 26 26"><path d="M13 4.500 A9 9 0 1 0 21.600 16 H16.800 A4.400 4.400 0 0 1 8.700 14.300 H22 A9 9 0 0 0 13 4.500 Z M8.800 11.300 A4.300 4.300 0 0 1 17.200 11.300 Z" fill="#2fa8e0" fill-rule="evenodd"/><path d="M3 22.500 Q-1 17 6 10 Q13 3.500 20 2.500 Q25.500 2 22.500 8" fill="none" stroke="#e8bf3a" stroke-width="1.700"/></svg>
<!-- explorer -->
<div class="abs" style="left:87px;top:657px;width:44px;height:30px;background:#74675d;border:1px solid #8d827a;border-bottom:0"></div>
<svg class="abs" style="left:97px;top:661px" width="24" height="23" viewBox="0 0 24 23"><path d="M1 3 H8 L10 5 H23 V20 H1 Z" fill="#e9c863"/><rect x="1" y="6.500" width="22" height="13.500" fill="#f5dd8a"/><path d="M4 22 V14 H20 V22 H16.500 V17.500 H7.500 V22 Z" fill="#58a8d8"/><rect x="4" y="2" width="2" height="1.500" fill="#5aa84a"/><rect x="9" y="3" width="2.500" height="1.500" fill="#d04a3a"/></svg>
<!-- opera -->
<div class="abs" style="left:134px;top:657px;width:44px;height:30px;background:#73665c;border:1px solid #8d827a;border-bottom:0"></div>
<svg class="abs" style="left:144px;top:659px" width="24" height="25" viewBox="0 0 24 25"><ellipse cx="12" cy="12.500" rx="11.500" ry="12" fill="#e8202a"/><ellipse cx="12" cy="12.500" rx="5" ry="8.800" fill="#76695f"/><path d="M12 0.500 A11.500 12 0 0 1 12 24.500 A8 12 0 0 0 12 0.500 Z" fill="#b8121c" opacity="0.550"/></svg>
<!-- chrome -->
<div class="abs" style="left:181px;top:657px;width:45px;height:30px;background:#90867e;border:1px solid #b9b1ab;border-bottom:0"></div>
<svg class="abs" style="left:192px;top:660px" width="23" height="23" viewBox="0 0 24 24"><circle cx="12" cy="12" r="11.500" fill="#dd4b3e"/><path d="M12 12 L2.040 6.250 A11.500 11.500 0 0 0 12 23.500 L17.500 14.500 Z" fill="#1b9a59"/><path d="M12 12 L12 23.500 A11.500 11.500 0 0 0 21.960 6.250 L12 6.250 Z" fill="#fcd045"/><path d="M12 12 L21.960 6.250 A11.500 11.500 0 0 0 2.040 6.250 Z" fill="#dd4b3e"/><path d="M2.040 6.250 L7.200 15 L12 12 Z" fill="#1b9a59"/><circle cx="12" cy="12" r="5.600" fill="#f4f4f4"/><circle cx="12" cy="12" r="4.400" fill="#4a8af4"/></svg>
<!-- firefox -->
<svg class="abs" style="left:238px;top:658px" width="26" height="26" viewBox="0 0 26 26"><circle cx="13" cy="14" r="11" fill="#f2792a"/><path d="M3 9 Q2 16 6 21 Q11 26 18 24 Q24 21 24.500 14 Q24.500 8 21 4.500 Q22 8 20 9.500 Q19 3 14.500 1 Q16 5 13 7 Q9 7 8.500 11 L5 9 Q4 6 5 4 Q3 6 3 9 Z" fill="#fbb72c"/><path d="M2.500 11 Q2 20 9 24 Q16 26 21 21 Q15 24 10 20 Q5 17 5 10 Z" fill="#e23a3a"/><circle cx="13.500" cy="12" r="5.200" fill="#3f5fd0"/><path d="M9 10 Q12 8 15 10 Q13 13 16 14 Q13 17 9.500 15 Z" fill="#2a3a9a"/></svg>
<!-- skype -->
<svg class="abs" style="left:286px;top:659px" width="25" height="25" viewBox="0 0 25 25"><circle cx="8" cy="8" r="7" fill="#1ba8e8"/><circle cx="17" cy="17" r="7" fill="#1ba8e8"/><circle cx="12.500" cy="12.500" r="10" fill="#1ba8e8"/><text x="12.500" y="18.300" text-anchor="middle" font-family="Liberation Sans" font-weight="700" font-size="16" fill="#fff">S</text></svg>
<!-- notepad -->
<div class="abs" style="left:323px;top:657px;width:45px;height:30px;background:#6e6158;border:1px solid #857a72;border-bottom:0"></div>
<svg class="abs" style="left:332px;top:660px" width="25" height="24" viewBox="0 0 25 24"><path d="M7 2 L21 4 L23.500 22 L18 23 L1 17.500 Z" fill="#dfe6ea"/><path d="M7.500 3.500 L19 5.300 L17.500 20.500 L2.500 16.500 Z" fill="#7fc3d4"/><path d="M8 4 L13 4.800 L8 15 L4 14 Z" fill="#b8e0ea" opacity="0.800"/><path d="M19 5.300 L21 4 L23.500 22 L18 23 L17.500 20.500 Z" fill="#f4f4f2"/></svg>
<!-- tray -->
<svg class="abs" style="left:897px;top:665.300px" width="14" height="14" viewBox="0 0 14 14"><path d="M2.500 11 L11 3 M4 4.500 L10 10" stroke="#c9c2bb" stroke-width="1"/><circle cx="2.800" cy="10.800" r="2" fill="#c24a3a"/><circle cx="11" cy="3.200" r="1.800" fill="#c24a3a"/><circle cx="4" cy="4.500" r="1.600" fill="#d8d2cc"/><circle cx="10.200" cy="10" r="1.600" fill="#d8d2cc"/></svg>
<svg class="abs" style="left:915px;top:664.300px" width="15" height="16" viewBox="0 0 15 16"><circle cx="6.500" cy="6.500" r="5.800" fill="#e8f4f2"/><path d="M6.500 2 A4.500 4.500 0 1 0 10.800 8 H8.400 A2.200 2.200 0 0 1 4.400 7.200 H11 A4.500 4.500 0 0 0 6.500 2 Z M4.500 5.700 A2.100 2.100 0 0 1 8.600 5.700 Z" fill="#1a9a8a" fill-rule="evenodd"/><circle cx="11" cy="11.500" r="3.300" fill="#e8b030"/></svg>
<svg class="abs" style="left:933px;top:664.300px" width="16" height="16" viewBox="0 0 16 16"><circle cx="4.500" cy="4.500" r="4" fill="#1ba8e8"/><circle cx="9.500" cy="9.500" r="4" fill="#1ba8e8"/><circle cx="7" cy="7" r="5.800" fill="#1ba8e8"/><text x="7" y="10.300" text-anchor="middle" font-family="Liberation Sans" font-weight="700" font-size="9" fill="#fff">S</text><circle cx="12" cy="12" r="2.700" fill="#e8a830"/></svg>
<svg class="abs" style="left:952px;top:665.300px" width="14" height="14" viewBox="0 0 14 14"><path d="M2 1 V13" stroke="#e8e4e0" stroke-width="1.300"/><path d="M2.700 1.500 H11 V7.500 H2.700 Z" fill="#e8e4e0"/><rect x="6.500" y="7" width="7" height="7" fill="#cf2a2a"/><path d="M8 8.500 L12 12.500 M12 8.500 L8 12.500" stroke="#fff" stroke-width="1.100"/></svg>
<svg class="abs" style="left:970px;top:665.300px" width="14" height="14" viewBox="0 0 14 14"><rect x="3.500" y="2.500" width="9.500" height="7" fill="none" stroke="#eee" stroke-width="1.100"/><path d="M8 9.500 V12 M5 12.500 H11" stroke="#eee" stroke-width="1.100"/><path d="M1.500 1 V9 M0.500 2 H2.500" stroke="#eee" stroke-width="0.900"/></svg>
<svg class="abs" style="left:988px;top:665.300px" width="14" height="14" viewBox="0 0 14 14"><path d="M1 5 H3.500 L7 2 V12 L3.500 9 H1 Z" fill="#f2f2f2"/><path d="M9 4.500 Q10.500 7 9 9.500 M11 3 Q13.500 7 11 11" stroke="#c8c2bc" stroke-width="0.900" fill="none"/></svg>
<div class="abs" style="left:1013px;top:667px;font-size:8.500px;color:#fff;line-height:10px;letter-spacing:-0.1px">РУС</div>
<div class="abs" style="left:1034px;top:660.600px;width:60px;text-align:center;font-size:8.600px;color:#fff;line-height:11px;letter-spacing:-0.25px">19:24</div>
<div class="abs" style="left:1034px;top:674px;width:60px;text-align:center;font-size:8.600px;color:#fff;line-height:11px;letter-spacing:-0.25px">16.02.2018</div>


</div></body></html>
